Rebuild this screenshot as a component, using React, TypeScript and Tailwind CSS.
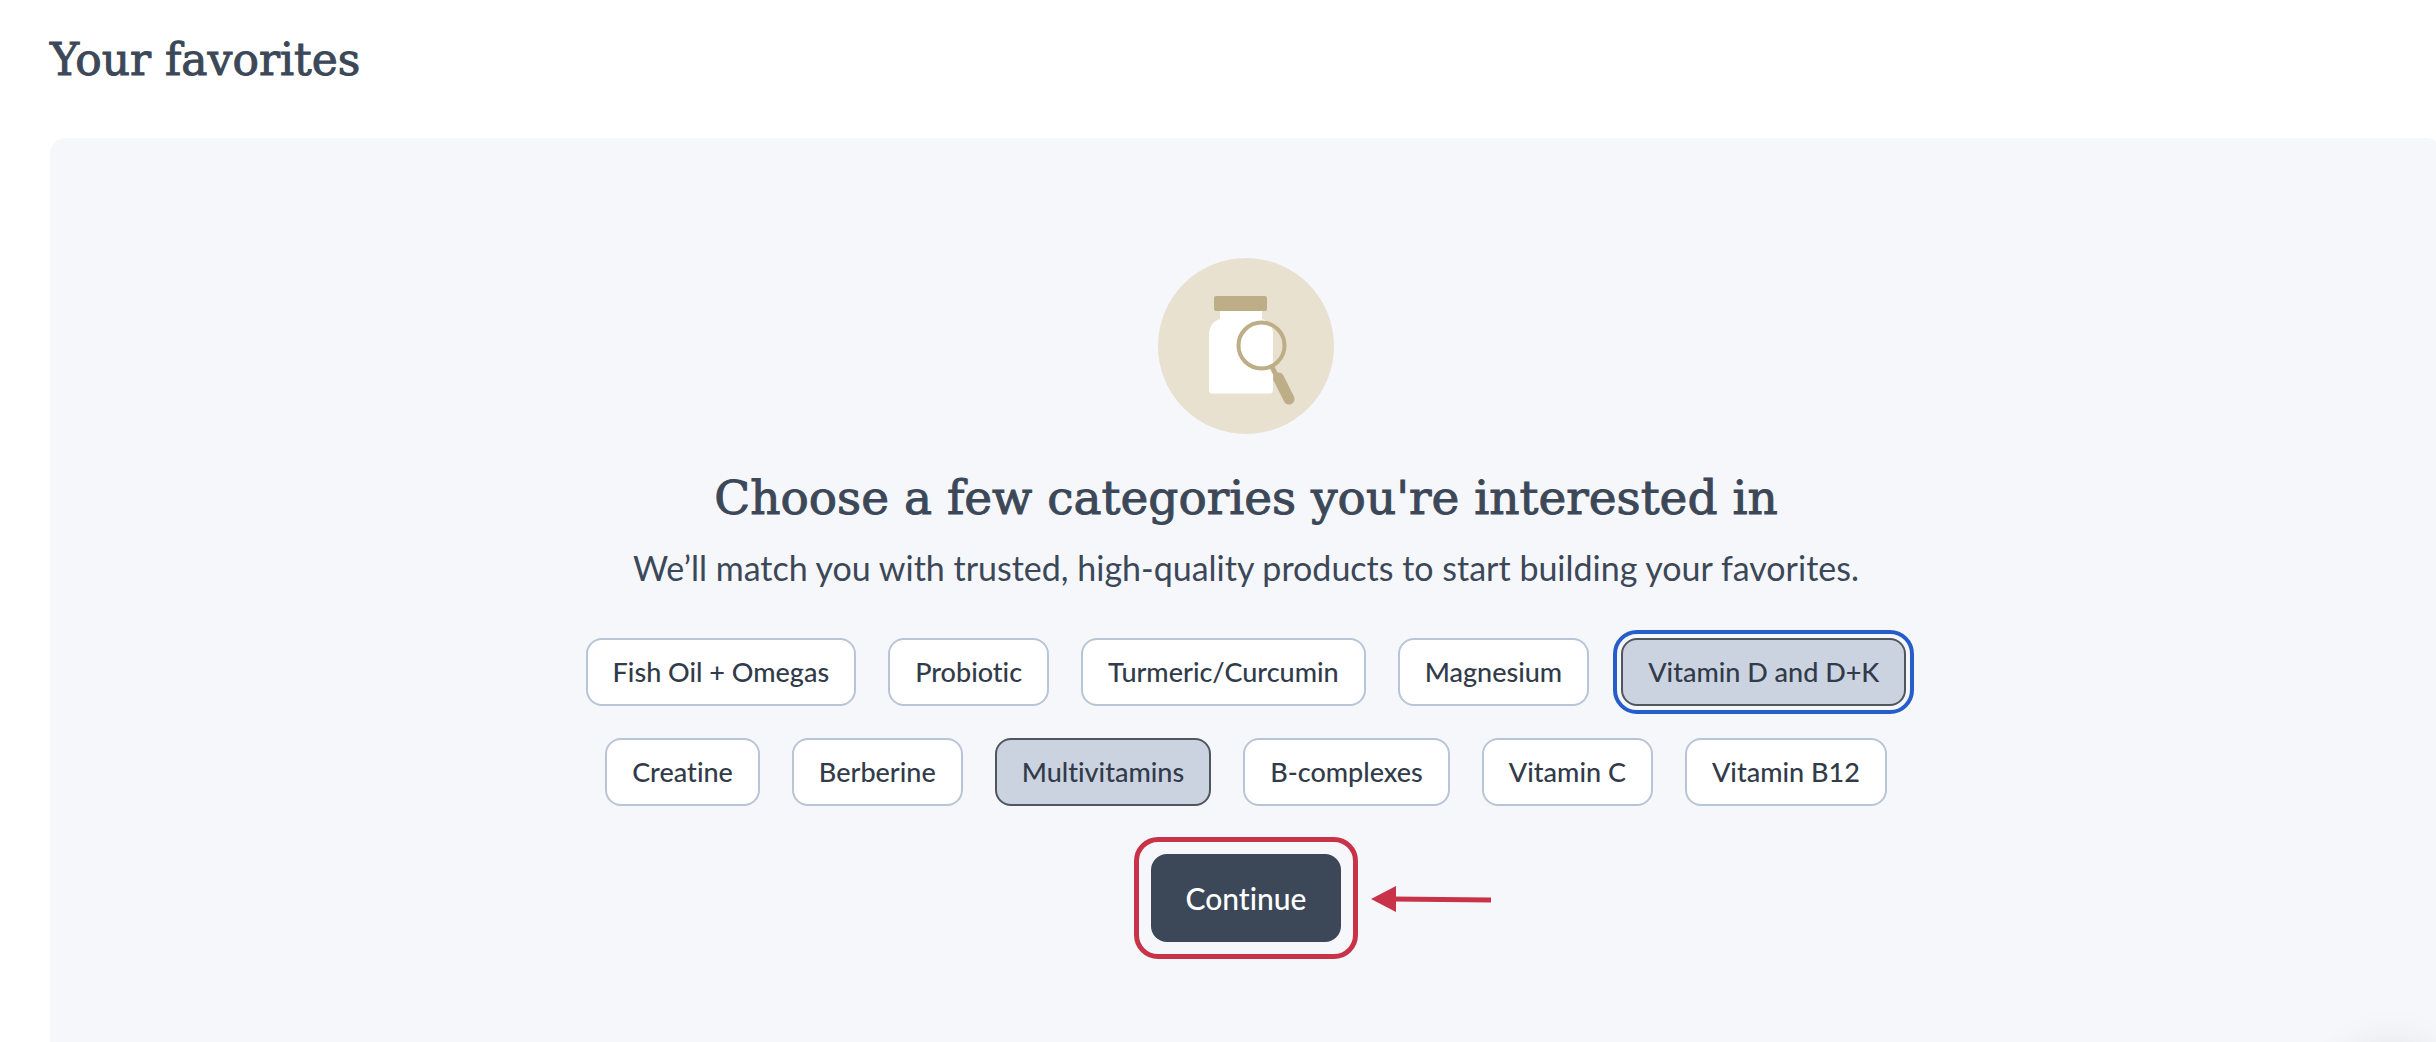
import { useState } from 'react';
import clsx from 'clsx';

const CATEGORIES = [
    'Fish Oil + Omegas',
    'Probiotic',
    'Turmeric/Curcumin',
    'Magnesium',
    'Vitamin D and D+K',
    'Creatine',
    'Berberine',
    'Multivitamins',
    'B-complexes',
    'Vitamin C',
    'Vitamin B12',
];

function BottleIcon() {
    return (
        <svg viewBox="0 0 176 176" className="w-44 h-44" aria-hidden="true">
            <circle cx="88" cy="88" r="88" fill="#e8e1d0" />
            {/* Bottle */}
            <path
                d="M62 52h42v9c7 2 11 8 11 15v56a3.500 3.500 0 0 1-3.500 3.500h-57a3.500 3.500 0 0 1-3.500-3.500V77c0-8 4-14 11-16z"
                fill="#fff"
            />
            <rect x="56" y="38" width="53" height="15" rx="2" fill="#beae88" />
            {/* Magnifier */}
            <circle cx="103.500" cy="87.500" r="23" fill="none" stroke="#beae88" strokeWidth="4" />
            <path d="M114 109l4 8" stroke="#beae88" strokeWidth="5" />
            <path d="M120.500 120l10.500 21" stroke="#beae88" strokeWidth="11" strokeLinecap="round" />
        </svg>
    );
}

export default function App() {
    const [selected, setSelected] = useState<string[]>(['Vitamin D and D+K', 'Multivitamins']);
    const [focused, setFocused] = useState('Vitamin D and D+K');

    const toggle = (name: string) => {
        setFocused(name);
        setSelected(s => (s.includes(name) ? s.filter(n => n !== name) : [...s, name]));
    };

    return (
        <main className="h-screen overflow-hidden bg-white pl-[50px] pt-7 text-[#3c4858] font-['Lato',sans-serif] [font-variant-ligatures:none]">
            <h1 className="h-[110px] text-[44px] leading-[64px] font-['DejaVu_Serif',serif] [-webkit-text-stroke:1px_#3c4858]">
                Your favorites
            </h1>

            <section className="-mr-1.5 flex flex-col items-center rounded-2xl bg-[#f5f7fb] py-[120px]">
                <BottleIcon />
                <h2 className="mt-7 text-[47px] leading-[72px] font-['DejaVu_Serif',serif] [-webkit-text-stroke:1px_#3c4858]">
                    Choose a few categories you're interested in
                </h2>
                <p className="mt-3 text-[34px] leading-[44px]">
                    We’ll match you with trusted, high-quality products to start building your favorites.
                </p>

                {/* Category chips */}
                <div className="mt-12 flex max-w-[1400px] flex-wrap justify-center gap-8">
                    {CATEGORIES.map(name => (
                        <button
                            key={name}
                            type="button"
                            aria-pressed={selected.includes(name)}
                            onClick={() => toggle(name)}
                            className={clsx(
                                'h-[68px] rounded-2xl border-2 px-[25px] text-[27px] font-medium text-[#323b49]',
                                selected.includes(name) ? 'border-[#50565d] bg-[#ccd3e0]' : 'border-[#b9c5d6] bg-white',
                                focused === name && 'outline-4 outline-offset-4 outline-[#265dc8]',
                            )}
                        >
                            {name}
                        </button>
                    ))}
                </div>

                {/* Continue, ringed and pointed at */}
                <div className="relative mt-12">
                    <button
                        type="button"
                        className="h-[88px] w-[190px] rounded-2xl bg-[#3c4858] text-[30px] font-medium text-white"
                    >
                        Continue
                    </button>
                    <div className="pointer-events-none absolute -inset-[17px] rounded-3xl border-5 border-[#c9334a]" />
                    <svg
                        viewBox="0 0 120 26"
                        className="absolute left-[220px] top-8 h-[26px] w-[120px]"
                        aria-hidden="true"
                    >
                        <path d="M22 13l98 1" stroke="#c9334a" strokeWidth="5" />
                        <path d="M0 13L25 0v26z" fill="#c9334a" />
                    </svg>
                </div>
            </section>

            {/* Glow of the floating launcher below the fold */}
            <div className="fixed -bottom-24 right-1 h-20 w-20 rounded-full shadow-[0_0_48px_8px_rgba(0,0,0,0.12)]" />
        </main>
    );
}
